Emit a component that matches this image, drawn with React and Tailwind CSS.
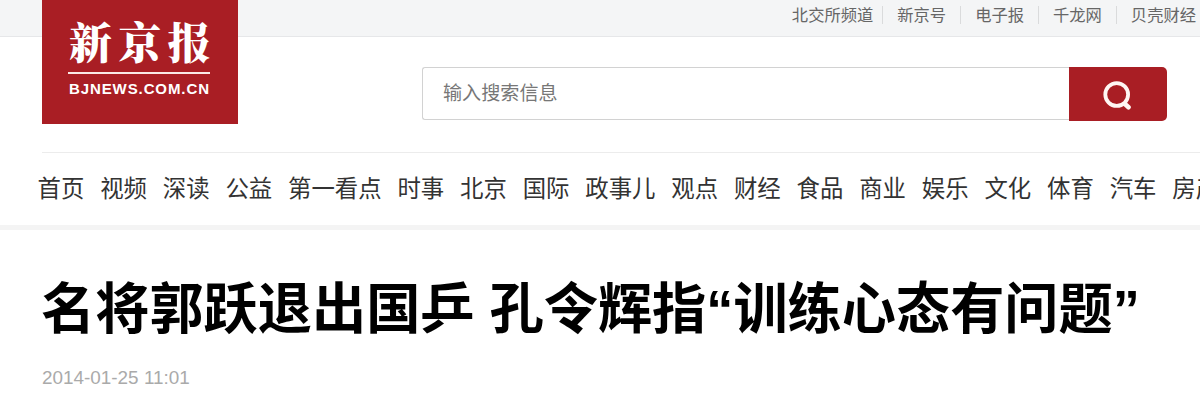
const nav = [
  '首页', '视频', '深读', '公益', '第一看点', '时事', '北京', '国际', '政事儿', '观点',
  '财经', '食品', '商业', '娱乐', '文化', '体育', '汽车', '房产',
];
const channels = ['北交所频道', '新京号', '电子报', '千龙网', '贝壳财经'];

export default function App() {
  return (
    <div className="relative h-[415px] w-[1200px] overflow-hidden bg-white font-['Liberation_Sans','Noto_Sans_CJK_SC',sans-serif] text-[#333]">
      <div className="flex h-[37px] justify-end border-b border-[#e6e7e9] bg-[#f4f5f6] pr-[4px] text-[16.3px] leading-[22px] text-[#666]">
        {channels.map((c, i) => (
          <span key={c} className="flex h-[30px] items-center whitespace-nowrap">
            {i > 0 && <i className={`mr-[14px] h-[18px] w-px bg-[#dadbdc] ${i === 1 ? 'ml-[9px]' : 'ml-[14px]'}`} />}
            {c}
          </span>
        ))}
      </div>
      <a className="absolute top-0 left-[42px] flex h-[124px] w-[196px] flex-col bg-[#a91e24] pl-[27px] text-white">
        <span className="mt-[17px] h-[55px] font-['Liberation_Serif','Noto_Serif_CJK_SC','Noto_Sans_CJK_SC',serif] text-[43px] leading-[56px] font-black tracking-[6.2px] whitespace-nowrap">新京报</span>
        <i className="-ml-px h-[2px] w-[142px] bg-[#fbe9e6]" />
        <span className="mt-[6px] text-[15px] leading-[18px] font-bold tracking-[0.9px]">BJNEWS.COM.CN</span>
      </a>
      <header className="ml-[42px] flex h-[116px] border-b border-[#ececec] pt-[30px] pl-[380px]">
        <div className="h-[53px] w-[647px] rounded-l-[3px] border border-r-0 border-[#d2d2d2] pl-[20px] text-[19.1px] leading-[51px] text-[#777]">输入搜索信息</div>
        <button className="flex h-[54px] w-[98px] items-center justify-center rounded-r-[5px] bg-[#a91e24]">
          <svg width="32" height="32" viewBox="0 0 32 32" fill="none" stroke="#fff6f3" strokeWidth="3.8" strokeLinecap="round"><circle cx="14.7" cy="16.5" r="11.4" /><path strokeWidth="4.6" d="m23.2 26.3 3.3 3" /></svg>
        </button>
      </header>
      <nav className="flex h-[77px] gap-[15.85px] overflow-hidden border-b-[5px] border-[#f4f4f4] pt-[19px] pl-[37.5px] text-[23.4px] leading-[34px] whitespace-nowrap">
        {nav.map((n) => <a key={n} className="shrink-0">{n}</a>)}
      </nav>
      <h1 className="mt-[41px] ml-[41px] text-[54.2px] leading-[76px] font-bold whitespace-nowrap text-black">名将郭跃退出国乒 孔令辉指“训练心态有问题”</h1>
      <time className="mt-[20px] ml-[42px] block text-[18.9px] leading-[22px] text-[#aaa]">2014-01-25 11:01</time>
    </div>
  );
}
